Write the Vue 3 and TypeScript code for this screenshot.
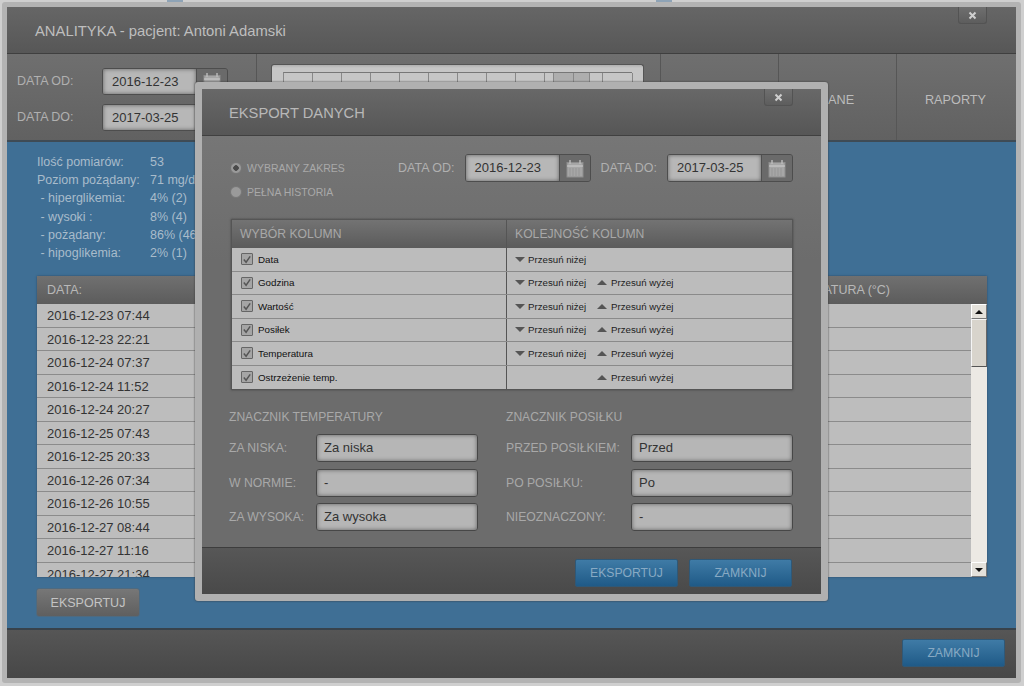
<script setup lang="ts">
const summary = [
  ['Ilość pomiarów:', '53'],
  ['Poziom pożądany:', '71 mg/dl'],
  [' - hiperglikemia:', '4% (2)'],
  [' - wysoki :', '8% (4)'],
  [' - pożądany:', '86% (46)'],
  [' - hipoglikemia:', '2% (1)'],
]
const rows = [
  '2016-12-23 07:44', '2016-12-23 22:21', '2016-12-24 07:37', '2016-12-24 11:52',
  '2016-12-24 20:27', '2016-12-25 07:43', '2016-12-25 20:33', '2016-12-26 07:34',
  '2016-12-26 10:55', '2016-12-27 08:44', '2016-12-27 11:16', '2016-12-27 21:34',
]
const columns = [
  { name: 'Data', down: true, up: false },
  { name: 'Godzina', down: true, up: true },
  { name: 'Wartość', down: true, up: true },
  { name: 'Posiłek', down: true, up: true },
  { name: 'Temperatura', down: true, up: true },
  { name: 'Ostrzeżenie temp.', down: false, up: true },
]
const temp = [['ZA NISKA:', 'Za niska'], ['W NORMIE:', '-'], ['ZA WYSOKA:', 'Za wysoka']]
const meal = [['PRZED POSIŁKIEM:', 'Przed'], ['PO POSIŁKU:', 'Po'], ['NIEOZNACZONY:', '-']]
const chartCells = [
  { w: 29 }, { w: 29 }, { w: 29 }, { w: 29 }, { w: 29 }, { w: 29 }, { w: 29 }, { w: 29 }, { w: 29 },
  { w: 9 }, { w: 20, dark: true }, { w: 16, dark: true }, { w: 13 }, { w: 30 },
]
</script>

<template>
  <div class="page">
    <span class="peek peek-a"></span>
    <span class="peek peek-b"></span>
    <div class="window">
      <header class="win-head">
        <span class="win-title">ANALITYKA - pacjent: Antoni Adamski</span>
        <button class="x-btn win-x">
          <svg width="9" height="9" viewBox="0 0 9 9"><path d="M1.5 1.5l6 6M7.5 1.5l-6 6" stroke="#cfcfcf" stroke-width="2" /></svg>
        </button>
      </header>

      <div class="toolbar">
        <div class="dates">
          <div class="date-row">
            <span class="lbl">DATA OD:</span>
            <div class="date-field">
              <span class="date-value">2016-12-23</span>
              <span class="cal-btn">
                <svg width="18" height="19" viewBox="0 0 18 19"><rect x="1" y="3.5" width="16" height="14.5" fill="#a6a6a6" stroke="#8d8d8d" /><path d="M1 7h16" stroke="#cfcfcf" /><path d="M4 1v4M14 1v4" stroke="#bdbdbd" stroke-width="1.4" /></svg>
              </span>
            </div>
          </div>
          <div class="date-row">
            <span class="lbl">DATA DO:</span>
            <div class="date-field">
              <span class="date-value">2017-03-25</span>
              <span class="cal-btn"></span>
            </div>
          </div>
        </div>
        <div class="chart-zone">
          <div class="chart">
            <div class="chart-grid">
              <i v-for="(c, n) in chartCells" :key="n" :class="{ dark: c.dark }" :style="{ width: c.w + 'px' }"></i>
            </div>
          </div>
        </div>
        <div class="tab"></div>
        <div class="tab">DANE</div>
        <div class="tab">RAPORTY</div>
      </div>

      <main class="blue">
        <div class="summary">
          <div v-for="s in summary" :key="s[0]" class="sum-row">
            <span class="sum-key">{{ s[0] }}</span>
            <span>{{ s[1] }}</span>
          </div>
        </div>
        <div class="data-table">
          <div class="dt-head">
            <span>DATA:</span>
            <span class="dt-temp">TEMPERATURA (°C)</span>
          </div>
          <div class="dt-body">
            <div class="dt-rows">
              <div v-for="r in rows" :key="r" class="dt-row">{{ r }}</div>
            </div>
            <div class="scrollbar">
              <span class="sb-btn"><i class="tri-up black"></i></span>
              <span class="sb-thumb"></span>
              <span class="sb-track"></span>
              <span class="sb-btn"><i class="tri-down black"></i></span>
            </div>
          </div>
        </div>
        <button class="grey-btn">EKSPORTUJ</button>
      </main>

      <footer class="win-foot">
        <button class="blue-btn">ZAMKNIJ</button>
      </footer>
    </div>

    <div class="modal">
      <header class="modal-head">
        <span class="modal-title">EKSPORT DANYCH</span>
        <button class="x-btn modal-x">
          <svg width="9" height="9" viewBox="0 0 9 9"><path d="M1.5 1.5l6 6M7.5 1.5l-6 6" stroke="#cfcfcf" stroke-width="2" /></svg>
        </button>
      </header>

      <div class="modal-body">
        <div class="range">
          <div class="radios">
            <label class="radio"><i class="dot on"></i>WYBRANY ZAKRES</label>
            <label class="radio"><i class="dot"></i>PEŁNA HISTORIA</label>
          </div>
          <div class="range-dates">
            <span class="lbl m-lbl">DATA OD:</span>
            <div class="date-field m-date">
              <span class="date-value">2016-12-23</span>
              <span class="cal-btn">
                <svg width="18" height="19" viewBox="0 0 18 19"><rect x="1" y="3.5" width="16" height="14.5" fill="#a6a6a6" stroke="#8d8d8d" /><path d="M1 7h16" stroke="#cfcfcf" /><path d="M4 9v8M7 9v8M10 9v8M13 9v8" stroke="#8f8f8f" stroke-width=".7" /><path d="M4 1v4M14 1v4" stroke="#bdbdbd" stroke-width="1.4" /></svg>
              </span>
            </div>
            <span class="lbl m-lbl">DATA DO:</span>
            <div class="date-field m-date">
              <span class="date-value">2017-03-25</span>
              <span class="cal-btn">
                <svg width="18" height="19" viewBox="0 0 18 19"><rect x="1" y="3.5" width="16" height="14.5" fill="#a6a6a6" stroke="#8d8d8d" /><path d="M1 7h16" stroke="#cfcfcf" /><path d="M4 9v8M7 9v8M10 9v8M13 9v8" stroke="#8f8f8f" stroke-width=".7" /><path d="M4 1v4M14 1v4" stroke="#bdbdbd" stroke-width="1.4" /></svg>
              </span>
            </div>
          </div>
        </div>

        <div class="col-table">
          <div class="ct-head">
            <span class="ct-left">WYBÓR KOLUMN</span>
            <span class="ct-right">KOLEJNOŚĆ KOLUMN</span>
          </div>
          <div v-for="c in columns" :key="c.name" class="ct-row">
            <div class="ct-left ct-name">
              <span class="check">
                <svg width="11" height="11" viewBox="0 0 11 11"><path d="M2 5.5l2.5 3L9 2" fill="none" stroke="#555" stroke-width="1.6" /></svg>
              </span>
              {{ c.name }}
            </div>
            <div class="ct-right ct-moves">
              <span class="move down-slot">
                <template v-if="c.down"><i class="tri-down"></i>Przesuń niżej</template>
              </span>
              <span class="move up-slot">
                <template v-if="c.up"><i class="tri-up"></i>Przesuń wyżej</template>
              </span>
            </div>
          </div>
        </div>

        <div class="markers">
          <section class="marker temp">
            <h3>ZNACZNIK TEMPERATURY</h3>
            <div v-for="f in temp" :key="f[0]" class="m-row">
              <span class="lbl">{{ f[0] }}</span>
              <span class="text-input">{{ f[1] }}</span>
            </div>
          </section>
          <section class="marker meal">
            <h3>ZNACZNIK POSIŁKU</h3>
            <div v-for="f in meal" :key="f[0]" class="m-row">
              <span class="lbl">{{ f[0] }}</span>
              <span class="text-input">{{ f[1] }}</span>
            </div>
          </section>
        </div>
      </div>

      <footer class="modal-foot">
        <button class="blue-btn">EKSPORTUJ</button>
        <button class="blue-btn">ZAMKNIJ</button>
      </footer>
    </div>
  </div>
</template>

<style>
html, body { margin: 0; background: #c9c9c9; }
</style>

<style scoped>
* { box-sizing: border-box; }
.page {
  position: relative;
  width: 1024px;
  height: 686px;
  padding: 2px 3px 3px 2px;
  background: #cfcfcf;
  overflow: hidden;
  font-family: "Liberation Sans", Arial, sans-serif;
  color: #c9c9c9;
}
.peek { position: absolute; top: 0; height: 2px; background: #8ea3b6; }
.peek-a { left: 167px; width: 16px; }
.peek-b { left: 656px; width: 16px; }
.window {
  height: 681px;
  border: 5px solid #b3b3b3;
  border-radius: 3px;
  display: flex;
  flex-direction: column;
  background: #666;
}
.win-head {
  position: relative;
  flex: 0 0 47px;
  padding: 15px 0 0 28px;
  background: linear-gradient(#666, #575757);
  border-bottom: 1px solid #3f3f3f;
}
.win-title { font-size: 14.8px; line-height: 17px; color: #bebebe; }
.x-btn {
  position: absolute;
  width: 29px;
  height: 17px;
  padding: 0;
  display: flex;
  align-items: center;
  justify-content: center;
  background: linear-gradient(#6f6f6f, #5d5d5d);
  border: 1px solid #535353;
  border-top: 0;
  border-radius: 0 0 3px 3px;
}
.win-x { top: 0; right: 29px; }
.toolbar {
  flex: 0 0 88px;
  display: flex;
  background: linear-gradient(#6f6f6f, #616161);
  border-bottom: 2px solid #3f4b55;
}
.dates {
  width: 250px;
  padding: 13px 0 0 10px;
  border-right: 1px solid #565656;
}
.date-row { display: flex; align-items: center; height: 28px; margin-bottom: 8px; }
.lbl { font-size: 12.5px; color: #b0b0b0; }
.date-row .lbl { width: 85px; }
.date-field {
  display: flex;
  width: 126px;
  height: 27px;
  border-radius: 3px;
  border: 1px solid #4d4d4d;
  background: #666;
  overflow: hidden;
}
.date-value {
  flex: 1;
  padding-left: 9px;
  font-size: 13px;
  line-height: 25px;
  color: #333;
  background: #b7b7b7;
  box-shadow: inset 0 0 4px #5f5f5f;
}
.cal-btn {
  flex: 0 0 31px;
  display: flex;
  align-items: center;
  justify-content: center;
  background: #6a6a6a;
  border-left: 1px solid #505050;
}
.chart-zone { width: 404px; padding: 10px 0 0 14px; border-right: 1px solid #565656; }
.chart {
  width: 373px;
  height: 60px;
  padding: 7px 11px;
  background: linear-gradient(#b0b0b0, #c6c6c6 3px);
  border: 1px solid #555;
  border-bottom-color: #999;
  border-radius: 3px 3px 0 0;
}
.chart-grid { display: flex; height: 40px; border-top: 1px solid #777; border-left: 1px solid #888; }
.chart-grid i { flex: 0 0 auto; border-right: 1px solid #888; }
.chart-grid i.dark { background: #aeaeae; }
.tab {
  width: 118px;
  display: flex;
  align-items: center;
  justify-content: center;
  padding: 6px 2px 0 0;
  font-size: 12.7px;
  color: #bcbcbc;
  border-right: 1px solid #565656;
}
.tab:last-child { border-right: 0; flex: 1; }
.blue {
  flex: 1;
  padding: 11px 0 0 30px;
  background: #3f6f95;
}
.summary { height: 123px; font-size: 12.5px; color: #a9bccb; }
.sum-row { display: flex; height: 18.2px; line-height: 18px; white-space: pre; }
.sum-key { width: 113px; }
.data-table { width: 950px; height: 301px; box-shadow: 0 0 2px #2d4a63; }
.dt-head {
  height: 28px;
  display: flex;
  justify-content: space-between;
  padding: 0 97px 0 10px;
  line-height: 28px;
  font-size: 12.5px;
  color: #b8b8b8;
  background: linear-gradient(#707070, #5c5c5c);
}
.dt-body { display: flex; height: 273px; background: #bdbdbd; overflow: hidden; }
.dt-rows { flex: 1; }
.dt-row {
  height: 23.5px;
  padding-left: 10px;
  font-size: 13px;
  line-height: 23px;
  color: #333;
  border-bottom: 1px solid #8b8b8b;
}
.scrollbar { width: 16px; display: flex; flex-direction: column; background: #ece9e4; }
.sb-btn {
  flex: 0 0 15px;
  display: flex;
  align-items: center;
  justify-content: center;
  background: #e4e1db;
  border: 1px solid #fff;
  border-right-color: #777;
  border-bottom-color: #777;
}
.sb-thumb { flex: 0 0 48px; background: #d8d4cc; border: 1px solid #f5f5f5; border-right-color: #666; border-bottom-color: #555; }
.sb-track { flex: 1; }
.grey-btn {
  display: block;
  width: 104px;
  height: 29px;
  margin: 11px 0 0 -1px;
  background: linear-gradient(#777, #5f5f5f);
  border: 1px solid #4e6a80;
  border-radius: 3px;
  color: #c4c4c4;
  font: 12.5px "Liberation Sans", Arial, sans-serif;
}
.win-foot {
  flex: 0 0 50px;
  display: flex;
  justify-content: flex-end;
  align-items: center;
  padding: 0 11px 3px 0;
  background: linear-gradient(#565656, #474747);
  border-top: 2px solid #38424b;
}
.blue-btn {
  width: 103px;
  height: 28px;
  padding: 0;
  border: 1px solid #2f5877;
  border-radius: 2px;
  background: linear-gradient(#3f7ba6, #1f5a87);
  color: #88aac4;
  font: 12.2px "Liberation Sans", Arial, sans-serif;
}

.modal {
  position: absolute;
  left: 195px;
  top: 82px;
  width: 633px;
  height: 519px;
  display: flex;
  flex-direction: column;
  border: 7px solid #b0b0b0;
  border-radius: 3px;
  background: #6d6d6d;
  box-shadow: 0 0 2px #333;
}
.modal-head {
  position: relative;
  flex: 0 0 47px;
  padding: 15px 0 0 27px;
  background: linear-gradient(#686868, #565656);
  border-bottom: 1px solid #404040;
}
.modal-title { font-size: 14.7px; line-height: 17px; color: #b8b8b8; }
.modal-x { top: 0; right: 28px; }
.modal-body { flex: 1; padding: 18px 28px 0 29px; background: linear-gradient(#767676, #6c6c6c 30%); }
.range { display: flex; height: 65px; }
.radios { width: 167px; padding-top: 2px; }
.radio {
  display: flex;
  align-items: center;
  gap: 5px;
  margin-left: -1px;
  height: 24px;
  font-size: 10.5px;
  color: #a9a9a9;
}
.dot {
  width: 12px;
  height: 12px;
  border-radius: 50%;
  background: #9a9a9a;
  border: 1px solid #777;
}
.dot.on { background: radial-gradient(circle, #4a4a4a 0 2.5px, #9a9a9a 3px); }
.range-dates { display: flex; align-items: flex-start; }
.m-lbl { line-height: 28px; margin-right: 10px; }
.m-date { margin-right: 10px; height: 28px; }
.m-date:last-child { margin-right: 0; }
.m-date .date-value { line-height: 26px; }
.col-table { width: 562px; border: 1px solid #555; box-shadow: 0 0 2px #444; }
.ct-head {
  display: flex;
  height: 28px;
  line-height: 28px;
  font-size: 12.2px;
  color: #a8a8a8;
  background: linear-gradient(#737373, #5b5b5b);
}
.ct-left { width: 275px; padding-left: 8px; border-right: 1px solid #555; }
.ct-right { flex: 1; padding-left: 8px; }
.ct-row { display: flex; height: 23.5px; background: #bcbcbc; border-bottom: 1px solid #8a8a8a; }
.ct-row:last-child { border-bottom: 0; }
.ct-name { display: flex; align-items: center; gap: 5px; padding-left: 9px; font-size: 9.8px; color: #111; }
.check {
  width: 12px;
  height: 12px;
  display: flex;
  align-items: center;
  justify-content: center;
  background: #a5a5a5;
  border: 1px solid #666;
  border-radius: 1px;
}
.ct-moves { display: flex; align-items: center; font-size: 9.7px; color: #1c1c1c; }
.move { display: flex; align-items: center; gap: 3px; }
.up-slot { gap: 4px; }
.down-slot { width: 82px; }
.tri-down, .tri-up { width: 0; height: 0; border-left: 5px solid transparent; border-right: 5px solid transparent; }
.tri-down { border-top: 5px solid #555; }
.tri-up { border-bottom: 5px solid #555; }
.tri-down.black { border-top-color: #111; border-left-width: 4px; border-right-width: 4px; border-top-width: 4px; }
.tri-up.black { border-bottom-color: #111; border-left-width: 4px; border-right-width: 4px; border-bottom-width: 4px; }
.markers { display: flex; margin: 20px 0 0 -2px; }
.marker { flex: 0 0 277px; }
.marker h3 { margin: 0 0 10px; font-size: 12.1px; font-weight: 400; line-height: 14px; color: #a8a8a8; }
.m-row { display: flex; align-items: center; height: 28px; margin-bottom: 6.5px; }
.m-row .lbl { flex: 0 0 auto; font-size: 12.2px; color: #a8a8a8; }
.temp .lbl { width: 87px; }
.meal .lbl { width: 125px; }
.text-input {
  flex: 0 0 162px;
  height: 28px;
  padding-left: 7px;
  line-height: 26px;
  font-size: 13px;
  color: #333;
  background: #b6b6b6;
  border: 1px solid #474747;
  border-radius: 3px;
  box-shadow: inset 0 0 4px #5f5f5f;
}
.modal-foot {
  flex: 0 0 47px;
  display: flex;
  justify-content: flex-end;
  align-items: center;
  gap: 11px;
  padding: 3px 29px 0 0;
  background: linear-gradient(#575757, #494949);
  border-top: 1px solid #3d3d3d;
}
</style>
